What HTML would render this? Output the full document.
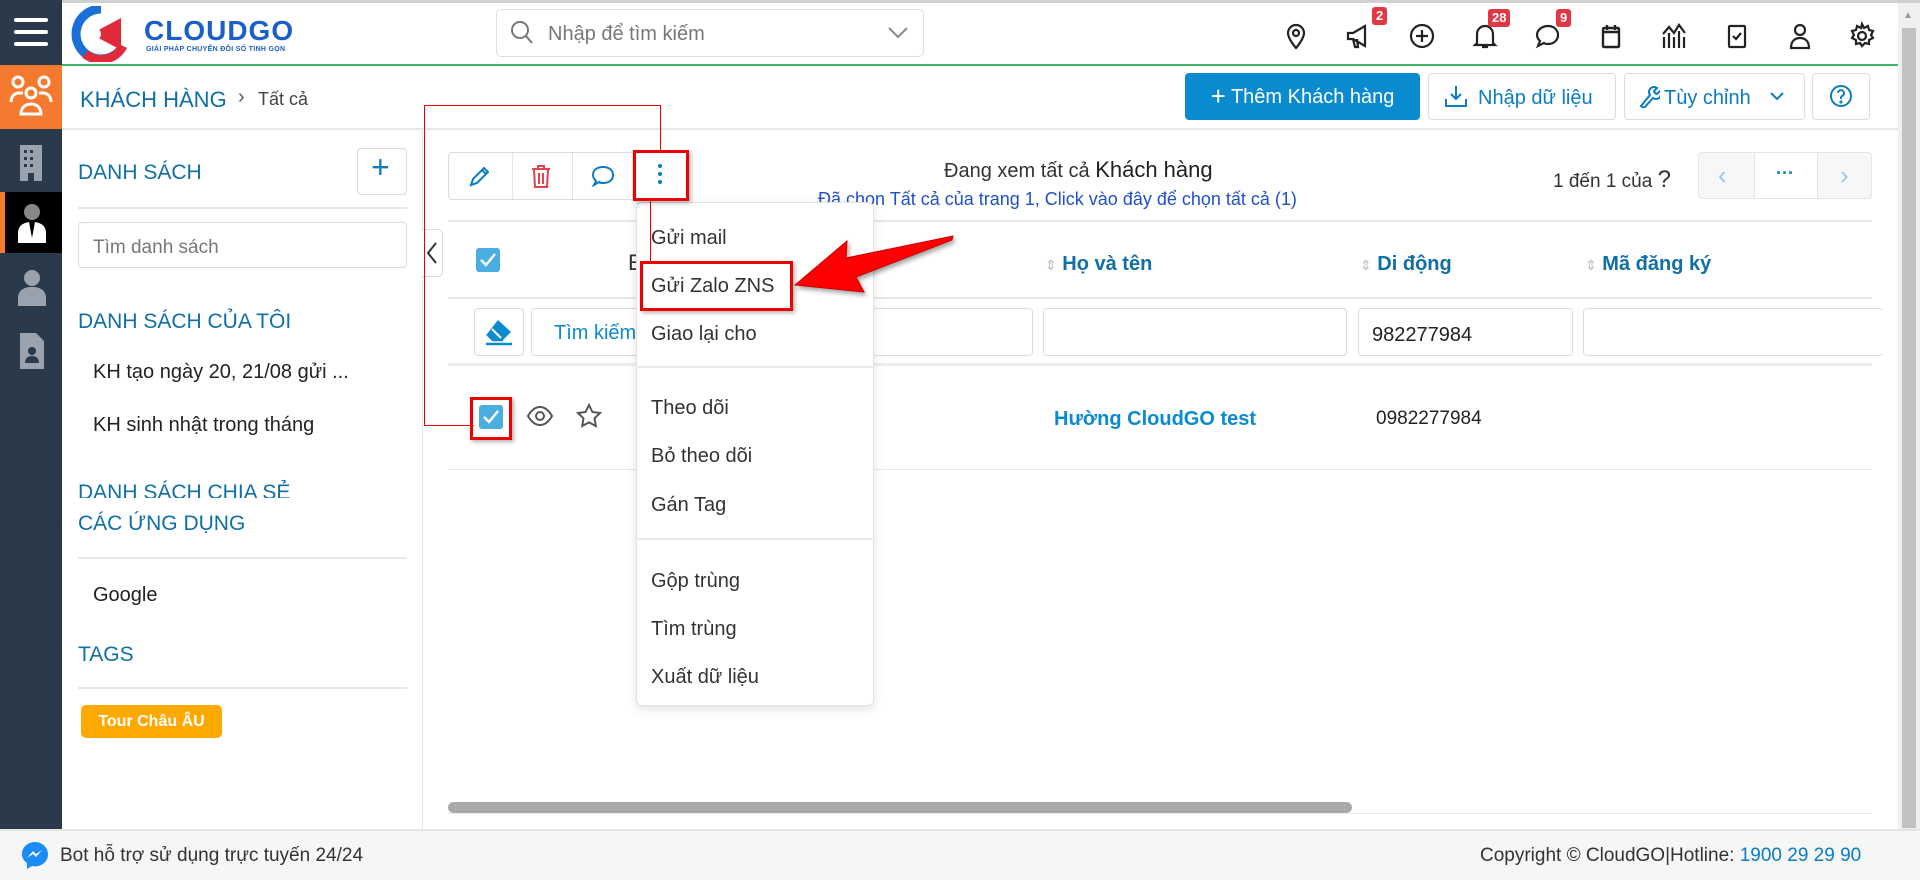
<!DOCTYPE html>
<html><head><meta charset="utf-8"><style>
*{box-sizing:border-box;margin:0;padding:0}
body{width:1920px;height:880px;overflow:hidden;background:#fff;font-family:"Liberation Sans","Noto Sans CJK SC",sans-serif;color:#222;position:relative}
.a{position:absolute}
.blue{color:#0f6fa6}
.t{white-space:nowrap}
.ic{position:absolute;width:30px;height:30px}
.badge{position:absolute;background:#e23744;color:#fff;font-size:13px;font-weight:bold;border-radius:3px;padding:1px 4px;line-height:16px}
.btn{position:absolute;border:1px solid #d8dde2;border-radius:4px;background:#fff}
.mi{position:absolute;left:651px;font-size:20px;color:#333}
.hl{position:absolute;height:1px;background:#e6e8ea}
.inp{position:absolute;border:1px solid #d8dde2;border-radius:4px;background:#fff;height:48px;top:308px}
</style></head><body>
<div class="a" style="left:0;top:0;width:1920px;height:3px;background:#d0d0d0"></div>
<div class="a" style="left:0;top:0;width:62px;height:829px;background:#2b3a4a"></div>
<div class="a" style="left:14px;top:18px;width:34px;height:4px;background:#fff;border-radius:2px"></div>
<div class="a" style="left:14px;top:30px;width:34px;height:4px;background:#fff;border-radius:2px"></div>
<div class="a" style="left:14px;top:42px;width:34px;height:4px;background:#fff;border-radius:2px"></div>
<div class="a" style="left:0;top:65px;width:62px;height:64px;background:#f47a30"></div>
<svg class="a" style="left:8px;top:74px" width="46" height="44" viewBox="0 0 46 44" fill="none" stroke="#fff" stroke-width="3"><circle cx="10" cy="8" r="5"/><circle cx="36" cy="8" r="5"/><circle cx="23" cy="19" r="5"/><path d="M3 28c0-6 4-9 8-9h4M43 28c0-6-4-9-8-9h-4M13 40c0-6 4-10 10-10s10 4 10 10z"/></svg>
<svg class="a" style="left:20px;top:145px" width="22" height="36" viewBox="0 0 22 36"><rect x="0" y="0" width="22" height="36" fill="#9aa3ad"/><g fill="#2b3a4a"><rect x="4" y="5" width="3" height="3"/><rect x="10" y="5" width="3" height="3"/><rect x="4" y="12" width="3" height="3"/><rect x="10" y="12" width="3" height="3"/><rect x="4" y="19" width="3" height="3"/><rect x="10" y="19" width="3" height="3"/><rect x="8" y="28" width="6" height="8"/></g></svg>
<div class="a" style="left:0;top:192px;width:62px;height:61px;background:#000"></div>
<div class="a" style="left:0;top:192px;width:5px;height:61px;background:#f47a30"></div>
<svg class="a" style="left:18px;top:203px" width="28" height="40" viewBox="0 0 28 40"><circle cx="14" cy="9" r="8" fill="#888"/><path d="M0 40v-10c0-7 5-11 14-11s14 4 14 11v10z" fill="#fff"/><path d="M11 19l3 16 3-16z" fill="#000"/></svg>
<svg class="a" style="left:18px;top:270px" width="28" height="36" viewBox="0 0 28 36" fill="#9aa3ad"><circle cx="14" cy="8" r="8"/><path d="M0 36v-8c0-7 5-11 14-11s14 4 14 11v8z"/></svg>
<svg class="a" style="left:20px;top:333px" width="24" height="36" viewBox="0 0 24 36" fill="#9aa3ad"><path d="M0 0h16l8 8v28H0z"/><circle cx="12" cy="18" r="4" fill="#2b3a4a"/><path d="M5 30c0-5 3-7 7-7s7 2 7 7z" fill="#2b3a4a"/></svg>

<div class="a" style="left:62px;top:64px;width:1836px;height:2px;background:#3fb56a"></div>
<svg class="a" style="left:71px;top:6px" width="60" height="56" viewBox="0 0 60 56"><path d="M30 3a25 25 0 1 0 22 37" fill="none" stroke="#1a6fd8" stroke-width="9"/><path d="M52 40A25 25 0 0 1 14 48" fill="none" stroke="#e02a3a" stroke-width="9"/><path d="M20 28l30-16v32z" fill="#e02a3a"/><circle cx="24" cy="28" r="6" fill="#fff"/></svg>
<div class="a t" style="left:144px;top:15px;font-size:28px;font-weight:bold;color:#1a5fc8;letter-spacing:1px">CLOUDGO</div>
<div class="a t" style="left:146px;top:46px;font-size:7px;font-weight:bold;color:#1a5fc8;letter-spacing:.3px">GIẢI PHÁP CHUYỂN ĐỔI SỐ TINH GỌN</div>
<div class="a" style="left:496px;top:9px;width:428px;height:48px;border:1px solid #dcdfe3;border-radius:5px"></div>
<svg class="a" style="left:510px;top:20px" width="24" height="26" viewBox="0 0 24 26" fill="none" stroke="#777" stroke-width="2"><circle cx="10" cy="10" r="8"/><path d="M16 16l6 7"/></svg>
<div class="a t" style="left:548px;top:23px;font-size:20px;color:#777">Nhập để tìm kiếm</div>
<svg class="a" style="left:888px;top:27px" width="20" height="12" viewBox="0 0 20 12" fill="none" stroke="#888" stroke-width="2"><path d="M1 1l9 9 9-9"/></svg>

<svg class="ic" style="left:1281px;top:21px" viewBox="0 0 30 30" fill="none" stroke="#222" stroke-width="2.2"><path d="M15 27s-8-9-8-15a8 8 0 0 1 16 0c0 6-8 15-8 15z"/><circle cx="15" cy="12" r="3"/></svg>
<svg class="ic" style="left:1344px;top:21px" viewBox="0 0 30 30" fill="none" stroke="#222" stroke-width="2.2"><path d="M4 12h5l12-7v20l-12-7H4zM9 18l2 8h3l-1-8"/></svg>
<div class="badge" style="left:1372px;top:7px">2</div>
<svg class="ic" style="left:1407px;top:21px" viewBox="0 0 30 30" fill="none" stroke="#222" stroke-width="2.2"><circle cx="15" cy="15" r="11"/><path d="M15 9v12M9 15h12"/></svg>
<svg class="ic" style="left:1470px;top:21px" viewBox="0 0 30 30" fill="none" stroke="#222" stroke-width="2.2"><path d="M7 22V13a8 8 0 0 1 16 0v9l2 2H5zM12 26h6"/></svg>
<div class="badge" style="left:1488px;top:9px">28</div>
<svg class="ic" style="left:1533px;top:21px" viewBox="0 0 30 30" fill="none" stroke="#222" stroke-width="2.2"><path d="M15 5c6 0 10 4 10 9s-4 9-10 9c-2 0-3 0-4-1l-6 3 2-5c-2-2-3-4-3-6 0-5 5-9 11-9z"/></svg>
<div class="badge" style="left:1556px;top:9px">9</div>
<svg class="ic" style="left:1596px;top:21px" viewBox="0 0 30 30" fill="none" stroke="#222" stroke-width="2.4"><rect x="7" y="7" width="16" height="19" rx="1"/><path d="M7 11h16M11 4v5M19 4v5"/></svg>
<svg class="ic" style="left:1659px;top:21px" viewBox="0 0 30 30" fill="none" stroke="#222" stroke-width="2.2"><path d="M5 27V16M10 27V12M15 27V16M20 27V10M25 27V16M4 13l6-7 5 6 5-8 6 8"/></svg>
<svg class="ic" style="left:1722px;top:21px" viewBox="0 0 30 30" fill="none" stroke="#222" stroke-width="2.2"><rect x="7" y="5" width="16" height="21" rx="1"/><path d="M11 15l3 3 5-6"/></svg>
<svg class="ic" style="left:1785px;top:21px" viewBox="0 0 30 30" fill="none" stroke="#222" stroke-width="2.2"><circle cx="15" cy="9" r="5"/><path d="M6 27c0-7 4-10 9-10s9 3 9 10z"/></svg>
<svg class="ic" style="left:1847px;top:21px" viewBox="0 0 30 30" fill="none" stroke="#222" stroke-width="2.2"><circle cx="15" cy="15" r="4"/><path d="M15 3l2 4 4-2 1 4 4 1-2 4 2 3-4 2 0 4-4-1-3 3-2-3-4 1v-4l-4-2 2-3-2-4 4-1 1-4 4 2z"/></svg>

<div class="a" style="left:1898px;top:3px;width:22px;height:826px;background:#f0f0f0"></div>
<div class="a" style="left:1902px;top:28px;width:14px;height:800px;background:#c1c1c1"></div>
<div class="a" style="left:1903px;top:10px;font-size:10px;color:#999">▲</div>

<div class="a t blue" style="left:80px;top:87px;font-size:22px">KHÁCH HÀNG</div>
<div class="a t" style="left:238px;top:86px;font-size:20px;color:#555">›</div>
<div class="a t" style="left:258px;top:89px;font-size:18px;color:#444">Tất cả</div>
<div class="a" style="left:62px;top:128px;width:1836px;height:2px;background:#e6e8ea"></div>
<div class="a t" style="left:1185px;top:73px;width:235px;height:47px;background:#0b8bcf;border-radius:4px;color:#fff;font-size:20px;line-height:47px;text-align:center"><span style="font-size:26px;vertical-align:-2px">+</span> Thêm Khách hàng</div>
<div class="btn" style="left:1428px;top:73px;width:188px;height:47px"></div>
<svg class="a" style="left:1444px;top:84px" width="24" height="24" viewBox="0 0 24 24" fill="none" stroke="#0b7cc0" stroke-width="2"><path d="M12 2v13M7 10l5 5 5-5M2 15v7h20v-7"/></svg>
<div class="a t" style="left:1478px;top:87px;font-size:20px;color:#0b7cc0">Nhập dữ liệu</div>
<div class="btn" style="left:1624px;top:73px;width:181px;height:47px"></div>
<svg class="a" style="left:1638px;top:84px" width="22" height="24" viewBox="0 0 22 24" fill="none" stroke="#0b7cc0" stroke-width="2"><path d="M3 22l9-11a5 5 0 0 1 7-7l-3 3 1 2 2 1 3-3a5 5 0 0 1-7 7L6 24z"/></svg>
<div class="a t" style="left:1664px;top:87px;font-size:20px;color:#0b7cc0">Tùy chỉnh</div>
<svg class="a" style="left:1770px;top:92px" width="14" height="9" viewBox="0 0 14 9" fill="none" stroke="#0b7cc0" stroke-width="2"><path d="M1 1l6 6 6-6"/></svg>
<div class="btn" style="left:1812px;top:73px;width:58px;height:47px"></div>
<svg class="a" style="left:1829px;top:84px" width="24" height="24" viewBox="0 0 24 24" fill="none" stroke="#0b7cc0" stroke-width="2"><circle cx="12" cy="12" r="10"/><path d="M9 9a3 3 0 1 1 4 3c-1 .5-1 1-1 3"/><circle cx="12" cy="18" r=".6"/></svg>

<div class="a" style="left:422px;top:130px;width:1px;height:699px;background:#e3e5e7"></div>
<div class="a t blue" style="left:78px;top:161px;font-size:21px">DANH SÁCH</div>
<div class="btn" style="left:357px;top:148px;width:50px;height:47px"></div>
<div class="a" style="left:371px;top:149px;font-size:32px;color:#0b7cc0;font-weight:300">+</div>
<div class="hl" style="left:78px;top:207px;width:329px;height:2px"></div>
<div class="btn" style="left:78px;top:222px;width:329px;height:46px"></div>
<div class="a t" style="left:93px;top:237px;font-size:19px;color:#777">Tìm danh sách</div>
<div class="a t blue" style="left:78px;top:310px;font-size:21px">DANH SÁCH CỦA TÔI</div>
<div class="a t" style="left:93px;top:361px;font-size:20px">KH tạo ngày 20, 21/08 gửi ...</div>
<div class="a t" style="left:93px;top:414px;font-size:20px">KH sinh nhật trong tháng</div>
<div class="a" style="left:78px;top:478px;height:20px;width:300px;overflow:hidden"><div class="t blue" style="font-size:21px;line-height:26px;margin-top:2px">DANH SÁCH CHIA SẺ</div></div>
<div class="a t blue" style="left:78px;top:512px;font-size:21px">CÁC ỨNG DỤNG</div>
<div class="hl" style="left:78px;top:557px;width:329px;height:2px"></div>
<div class="a t" style="left:93px;top:584px;font-size:20px">Google</div>
<div class="a t blue" style="left:78px;top:643px;font-size:21px">TAGS</div>
<div class="hl" style="left:78px;top:687px;width:329px;height:2px"></div>
<div class="a" style="left:81px;top:705px;width:141px;height:33px;background:#ffa800;border-radius:5px;color:#fff;font-size:16px;font-weight:bold;text-align:center;line-height:33px">Tour Châu ÂU</div>

<div class="a" style="left:0;top:829px;width:1920px;height:51px;background:#f5f6f6;border-top:2px solid #e2e4e6"></div>
<svg class="a" style="left:20px;top:840px" width="30" height="30" viewBox="0 0 30 30"><path d="M15 2C8 2 2 7 2 14c0 4 2 7 5 9v6l5-3c1 0 2 .4 3 .4 7 0 13-5 13-12S22 2 15 2z" fill="#1b8cf6"/><path d="M7 18l6-7 3 3 6-4-6 7-3-3z" fill="#fff"/></svg>
<div class="a t" style="left:60px;top:845px;font-size:19px;color:#333">Bot hỗ trợ sử dụng trực tuyến 24/24</div>
<div class="a t" style="left:1480px;top:845px;font-size:19px;color:#333">Copyright © CloudGO|Hotline: <span style="color:#0b7cc0">1900 29 29 90</span></div>

<div class="btn" style="left:448px;top:152px;width:241px;height:48px"></div>
<div class="a" style="left:512px;top:153px;width:1px;height:46px;background:#e3e5e7"></div>
<div class="a" style="left:572px;top:153px;width:1px;height:46px;background:#e3e5e7"></div>
<div class="a" style="left:632px;top:153px;width:1px;height:46px;background:#e3e5e7"></div>
<svg class="a" style="left:468px;top:164px" width="24" height="24" viewBox="0 0 24 24" fill="none" stroke="#0b7cc0" stroke-width="2"><path d="M3 21l2-6L16 4l4 4L9 19z M14 6l4 4"/></svg>
<svg class="a" style="left:530px;top:164px" width="22" height="24" viewBox="0 0 22 24" fill="none" stroke="#e2424f" stroke-width="2"><path d="M2 5h18M8 5V2h6v3M4 5l1 18h12l1-18M9 9v11M13 9v11"/></svg>
<svg class="a" style="left:591px;top:165px" width="24" height="22" viewBox="0 0 24 22" fill="none" stroke="#0b7cc0" stroke-width="2"><path d="M12 2c6 0 10 3 10 8s-4 8-10 8c-1 0-3 0-4-1l-5 3 2-4C3 14 2 12 2 10c0-5 4-8 10-8z"/></svg>
<div class="a" style="left:658px;top:164px;width:4px;height:4px;border-radius:2px;background:#0b7cc0;box-shadow:0 8px 0 #0b7cc0,0 16px 0 #0b7cc0"></div>

<div class="a t" style="left:944px;top:157px;font-size:20px;color:#333">Đang xem tất cả <span style="font-size:22px;color:#222">Khách hàng</span></div>
<div class="a t" style="left:818px;top:189px;font-size:18px;color:#2050c8">Đã chọn Tất cả của trang 1, Click vào đây để chọn tất cả (1)</div>
<div class="a t" style="left:1553px;top:166px;font-size:19px;color:#333">1 đến 1 của <span style="font-size:24px">?</span></div>
<div class="a" style="left:1698px;top:152px;width:174px;height:47px;border:1px solid #e3e5e7;border-radius:4px;background:#f6f7f8"></div>
<div class="a" style="left:1754px;top:152px;width:64px;height:47px;background:#fff;border:1px solid #e3e5e7"></div>
<div class="a" style="left:1718px;top:160px;font-size:26px;color:#9cc7e6">‹</div>
<div class="a" style="left:1776px;top:163px;font-size:18px;color:#0b7cc0;font-weight:bold">···</div>
<div class="a" style="left:1840px;top:160px;font-size:26px;color:#9cc7e6">›</div>
<div class="hl" style="left:448px;top:220px;width:1424px;height:2px"></div>

<div class="a" style="left:422px;top:229px;width:21px;height:48px;border:1px solid #d8dde2;border-left:none;border-radius:0 5px 5px 0;background:#fff"></div>
<svg class="a" style="left:426px;top:242px" width="12" height="22" viewBox="0 0 12 22" fill="none" stroke="#333" stroke-width="2"><path d="M10 1L2 11l8 10"/></svg>
<div class="a" style="left:476px;top:248px;width:24px;height:24px;background:#4aaee0;border-radius:3px"></div>
<svg class="a" style="left:479px;top:252px" width="18" height="16" viewBox="0 0 18 16" fill="none" stroke="#fff" stroke-width="2.4"><path d="M2 8l5 5 9-11"/></svg>
<div class="a t" style="left:628px;top:250px;font-size:22px;color:#333">E</div>
<div class="a t blue" style="left:1045px;top:253px;font-size:20px;font-weight:bold"><span style="color:#bbb;font-weight:normal;font-size:14px">⇕</span> Họ và tên</div>
<div class="a t blue" style="left:1360px;top:253px;font-size:20px;font-weight:bold"><span style="color:#bbb;font-weight:normal;font-size:14px">⇕</span> Di động</div>
<div class="a t blue" style="left:1585px;top:253px;font-size:20px;font-weight:bold"><span style="color:#bbb;font-weight:normal;font-size:14px">⇕</span> Mã đăng ký</div>
<div class="hl" style="left:448px;top:297px;width:1424px;height:2px"></div>

<div class="btn" style="left:474px;top:308px;width:50px;height:48px"></div>
<svg class="a" style="left:484px;top:318px" width="30" height="28" viewBox="0 0 30 28"><path d="M14 2l13 12-8 8H9L3 16z" fill="#0b8bcf"/><path d="M3 16l6 6h10" fill="none" stroke="#0b8bcf" stroke-width="2.5"/><path d="M2 26h26" stroke="#0b8bcf" stroke-width="2.5"/><path d="M8 11l9 9" stroke="#fff" stroke-width="2"/></svg>
<div class="inp" style="left:531px;width:130px"></div>
<div class="a t" style="left:554px;top:322px;font-size:20px;color:#0b8bcf">Tìm kiếm</div>
<div class="inp" style="left:860px;width:173px"></div>
<div class="inp" style="left:1043px;width:304px"></div>
<div class="inp" style="left:1358px;width:215px"></div>
<div class="a t" style="left:1372px;top:324px;font-size:20px;color:#222">982277984</div>
<div class="inp" style="left:1583px;width:300px;border-right:none"></div>
<div class="hl" style="left:448px;top:363px;width:1424px;height:3px;background:#eceef0"></div>

<div class="a" style="left:479px;top:405px;width:24px;height:24px;background:#4aaee0;border-radius:3px"></div>
<svg class="a" style="left:482px;top:409px" width="18" height="16" viewBox="0 0 18 16" fill="none" stroke="#fff" stroke-width="2.4"><path d="M2 8l5 5 9-11"/></svg>
<svg class="a" style="left:526px;top:405px" width="28" height="22" viewBox="0 0 28 22" fill="none" stroke="#555" stroke-width="2"><path d="M2 11C6 4 10 2 14 2s8 2 12 9c-4 7-8 9-12 9S6 18 2 11z"/><circle cx="14" cy="11" r="4"/></svg>
<svg class="a" style="left:576px;top:403px" width="26" height="26" viewBox="0 0 26 26" fill="none" stroke="#555" stroke-width="2"><path d="M13 2l3.4 7 7.6 1-5.5 5.3 1.3 7.7L13 19.4 6.2 23l1.3-7.7L2 10l7.6-1z"/></svg>
<div class="a t" style="left:1054px;top:408px;font-size:20px;color:#0b8bcf;font-weight:bold">Hường CloudGO test</div>
<div class="a t" style="left:1376px;top:408px;font-size:19px;color:#222">0982277984</div>
<div class="hl" style="left:448px;top:469px;width:1424px"></div>

<div class="a" style="left:448px;top:802px;width:904px;height:11px;background:#a9a9a9;border-radius:6px"></div>
<div class="hl" style="left:448px;top:813px;width:1424px"></div>

<div class="a" style="left:636px;top:202px;width:238px;height:504px;background:#fff;border:1px solid #e0e2e4;border-radius:6px;box-shadow:0 3px 10px rgba(0,0,0,.12)"></div>
<div class="mi t" style="top:227px">Gửi mail</div>
<div class="mi t" style="top:275px">Gửi Zalo ZNS</div>
<div class="mi t" style="top:323px">Giao lại cho</div>
<div class="a" style="left:636px;top:366px;width:238px;height:2px;background:#e6e8ea"></div>
<div class="mi t" style="top:397px">Theo dõi</div>
<div class="mi t" style="top:445px">Bỏ theo dõi</div>
<div class="mi t" style="top:494px">Gán Tag</div>
<div class="a" style="left:636px;top:538px;width:238px;height:2px;background:#e6e8ea"></div>
<div class="mi t" style="top:570px">Gộp trùng</div>
<div class="mi t" style="top:618px">Tìm trùng</div>
<div class="mi t" style="top:666px">Xuất dữ liệu</div>

<div class="a" style="left:424px;top:105px;width:237px;height:1px;background:#e00"></div>
<div class="a" style="left:660px;top:105px;width:1px;height:46px;background:#e00"></div>
<div class="a" style="left:424px;top:105px;width:1px;height:321px;background:#e00"></div>
<div class="a" style="left:424px;top:425px;width:50px;height:1px;background:#e00"></div>
<div class="a" style="left:650px;top:201px;width:1px;height:60px;background:#e00"></div>
<div class="a" style="left:633px;top:150px;width:56px;height:51px;border:3px solid #e00;box-shadow:2px 2px 4px rgba(0,0,0,.3)"></div>
<div class="a" style="left:470px;top:397px;width:42px;height:43px;border:3px solid #e00;box-shadow:2px 2px 4px rgba(0,0,0,.3)"></div>
<div class="a" style="left:640px;top:261px;width:153px;height:50px;border:3px solid #e00;box-shadow:2px 2px 4px rgba(0,0,0,.3)"></div>
<svg class="a" style="left:790px;top:230px;overflow:visible" width="170" height="70" viewBox="790 230 170 70"><polygon points="795,285 847,241 846,258 953,236 952,240 856,277 864,292" fill="#f00" stroke="#c00" stroke-width="1" style="filter:drop-shadow(2px 3px 2px rgba(0,0,0,.35))"/></svg>
</body></html>
